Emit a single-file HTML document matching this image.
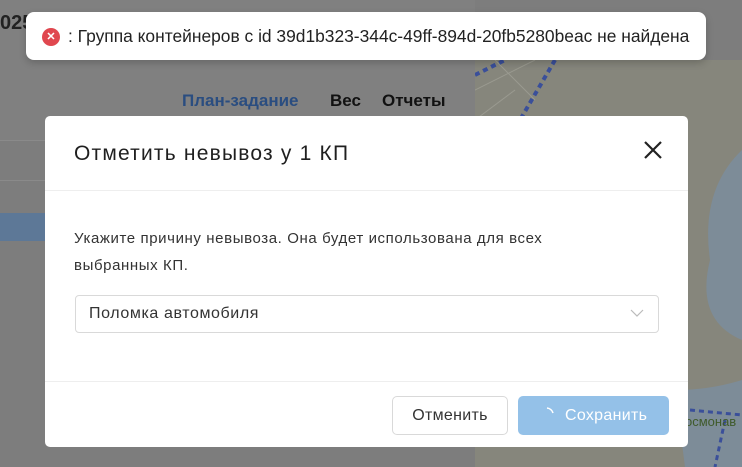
<!DOCTYPE html>
<html><head><meta charset="utf-8"><style>
*{box-sizing:border-box;margin:0;padding:0}
body{width:742px;height:467px;overflow:hidden;position:relative;background:#7d7d7d;font-family:"Liberation Sans","Noto Sans CJK SC",sans-serif}
.abs{position:absolute}
</style></head><body>
<div class="abs" style="left:0;top:0;width:475px;height:140px;background:#808080"></div>
<div class="abs" style="left:0;top:140px;width:475px;height:1px;background:#8a8a8a"></div>
<div class="abs" style="left:0;top:180px;width:475px;height:1px;background:#8a8a8a"></div>
<div class="abs" style="left:0;top:213px;width:45px;height:28px;background:#5d7897"></div>
<div class="abs" style="left:475px;top:60px;width:267px;height:407px;background:#86867c"></div>
<svg class="abs" style="left:475px;top:60px" width="267" height="407">
<path d="M0 30 L60 0 M0 60 L40 30 M20 0 L60 40" stroke="#9a9a90" stroke-width="1" fill="none"/>
<path d="M267 90 Q225 130 235 200 Q220 260 267 280 Z" fill="#7d8c98"/>
<path d="M200 330 Q235 330 267 320 L267 407 L210 407 Z" fill="#7d8c98"/>
<path d="M80 0 L45 60 M0 15 L30 0" stroke="#3a4f9a" stroke-width="4" stroke-dasharray="5 4" fill="none"/>
<path d="M215 350 L267 355 M250 360 L240 407" stroke="#3a4f9a" stroke-width="3" stroke-dasharray="5 4" fill="none"/>
<text x="210" y="366" font-size="13" fill="#3f5a2a" font-family="Liberation Sans">осмонав</text>
</svg>
<div class="abs" style="left:0;top:12px;font-size:20px;font-weight:bold;color:#222">025</div>
<div class="abs" style="left:182px;top:91px;font-size:17px;font-weight:bold;color:#2a4d80">План-задание</div>
<div class="abs" style="left:330px;top:91px;font-size:17px;font-weight:bold;color:#111">Вес</div>
<div class="abs" style="left:382px;top:91px;font-size:17px;font-weight:bold;color:#111">Отчеты</div>

<div class="abs" style="left:26px;top:12px;width:680px;height:48px;background:#fff;border-radius:8px;box-shadow:0 3px 8px rgba(0,0,0,.2)"></div>
<div class="abs" style="left:42px;top:28px;width:18px;height:18px;border-radius:50%;background:#e0474f;color:#fff;font-size:11px;text-align:center;line-height:18px;font-weight:bold">✕</div>
<div class="abs" style="left:68px;top:26px;font-size:17.4px;color:#222;white-space:nowrap">: Группа контейнеров с id 39d1b323-344c-49ff-894d-20fb5280beac не найдена</div>

<div class="abs" style="left:45px;top:116px;width:643px;height:331px;background:#fff;border-radius:5px"></div>
<div class="abs" style="left:74px;top:142px;font-size:21px;letter-spacing:1.2px;color:#1f1f1f">Отметить невывоз у 1 КП</div>
<svg class="abs" style="left:643px;top:140px" width="20" height="20"><path d="M2 2L18 18M18 2L2 18" stroke="#222" stroke-width="2.2"/></svg>
<div class="abs" style="left:45px;top:190px;width:643px;height:1px;background:#eeeeee"></div>
<div class="abs" style="left:74px;top:225px;width:510px;font-size:15px;letter-spacing:0.6px;line-height:27px;color:#333">Укажите причину невывоза. Она будет использована для всех выбранных КП.</div>
<div class="abs" style="left:75px;top:295px;width:584px;height:38px;border:1px solid #d9d9d9;border-radius:4px"></div>
<div class="abs" style="left:89px;top:305px;font-size:16px;letter-spacing:0.6px;color:#333">Поломка автомобиля</div>
<svg class="abs" style="left:630px;top:308px" width="14" height="10"><path d="M1 2L7 8L13 2" stroke="#bbb" stroke-width="1.2" fill="none"/></svg>
<div class="abs" style="left:45px;top:381px;width:643px;height:1px;background:#eeeeee"></div>
<div class="abs" style="left:392px;top:396px;width:116px;height:39px;border:1px solid #d9d9d9;border-radius:5px;font-size:16px;letter-spacing:0.3px;color:#333;text-align:center;line-height:37px">Отменить</div>
<div class="abs" style="left:518px;top:396px;width:151px;height:39px;background:#94c1e8;border-radius:5px;font-size:16px;letter-spacing:0.3px;color:#fff;line-height:39px;padding-left:47px">Сохранить</div>
<svg class="abs" style="left:537px;top:405px" width="20" height="20"><path d="M10 3 A7 7 0 0 1 16 8" stroke="#fff" stroke-width="1.6" fill="none"/></svg>
</body></html>
